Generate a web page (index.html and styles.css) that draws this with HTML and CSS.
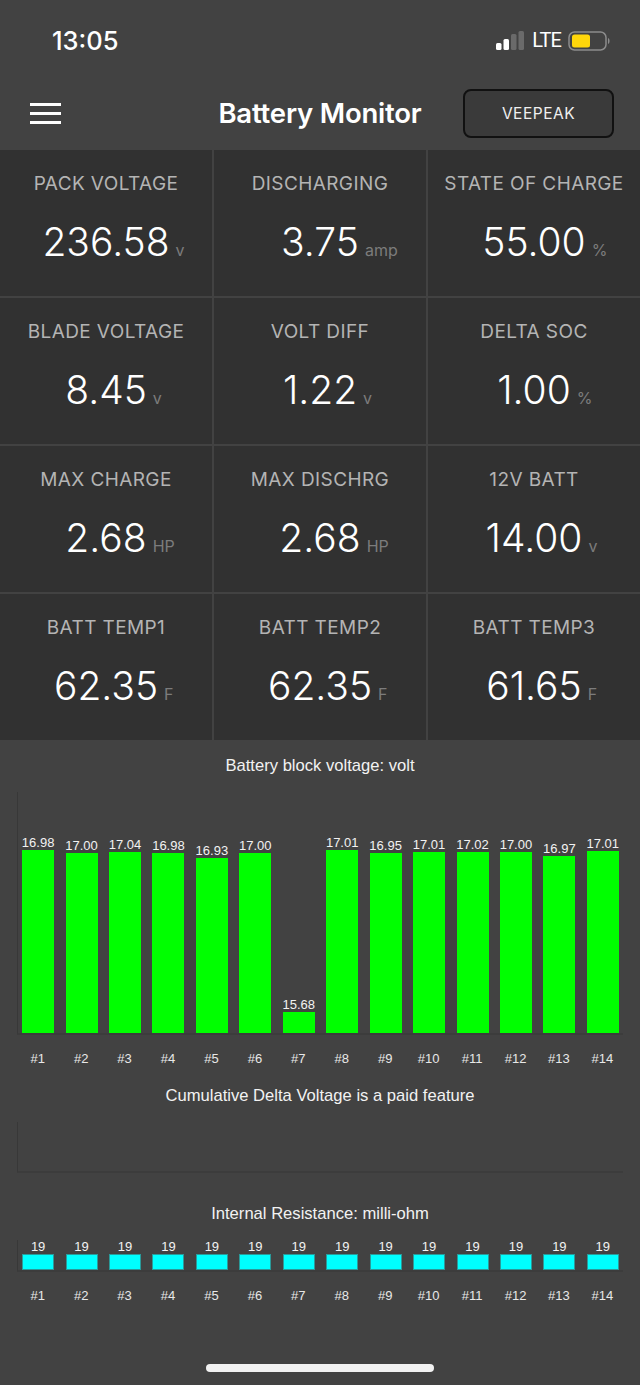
FILE: index.html
```html
<!DOCTYPE html>
<html>
  <head>
    <meta charset="utf-8">
    <title>Battery Monitor</title>
    <link rel="stylesheet" href="styles.css">
  </head>
  <body>
    <div id="bm-main">
      <div class="status-bar">
        <span class="status-time">13:05</span>
        <div class="status-icons">
          <svg class="signal" width="28" height="19" viewBox="0 0 28 19">
            <rect x="0" y="12" width="5.5" height="7" rx="1.5" fill="#fff"/>
            <rect x="7.5" y="8" width="5.5" height="11" rx="1.5" fill="#fff"/>
            <rect x="15" y="3" width="5.5" height="16" rx="1.5" fill="#6a6a6a"/>
            <rect x="22.5" y="0" width="5.5" height="19" rx="1.5" fill="#6a6a6a"/>
          </svg>
          <span class="status-lte">LTE</span>
          <svg class="battery" width="43" height="20" viewBox="0 0 43 20">
            <rect x="1" y="1" width="37" height="18" rx="5.5" fill="none" stroke="#8c8c8c" stroke-width="1.5"/>
            <rect x="4" y="3.5" width="18" height="13" rx="2.5" fill="#ffd60a"/>
            <path d="M40 7 C42 7.5 42 12.5 40 13 Z" fill="#8c8c8c"/>
          </svg>
        </div>
      </div>

      <div class="nav-bar">
        <div class="menu-btn"><span></span><span></span><span></span></div>
        <h1 class="nav-title">Battery Monitor</h1>
        <button class="device-btn">VEEPEAK</button>
      </div>

      <div class="stat-grid">
        <div class="stat"><div class="stat-label">PACK VOLTAGE</div><div class="stat-value"><span class="num">236.58</span><small>v</small></div></div>
        <div class="stat"><div class="stat-label">DISCHARGING</div><div class="stat-value"><span class="num">3.75</span><small>amp</small></div></div>
        <div class="stat"><div class="stat-label">STATE OF CHARGE</div><div class="stat-value"><span class="num">55.00</span><small>%</small></div></div>
        <div class="stat"><div class="stat-label">BLADE VOLTAGE</div><div class="stat-value"><span class="num">8.45</span><small>v</small></div></div>
        <div class="stat"><div class="stat-label">VOLT DIFF</div><div class="stat-value"><span class="num">1.22</span><small>v</small></div></div>
        <div class="stat"><div class="stat-label">DELTA SOC</div><div class="stat-value"><span class="num">1.00</span><small>%</small></div></div>
        <div class="stat"><div class="stat-label">MAX CHARGE</div><div class="stat-value"><span class="num">2.68</span><small>HP</small></div></div>
        <div class="stat"><div class="stat-label">MAX DISCHRG</div><div class="stat-value"><span class="num">2.68</span><small>HP</small></div></div>
        <div class="stat"><div class="stat-label">12V BATT</div><div class="stat-value"><span class="num">14.00</span><small>v</small></div></div>
        <div class="stat"><div class="stat-label">BATT TEMP1</div><div class="stat-value"><span class="num">62.35</span><small>F</small></div></div>
        <div class="stat"><div class="stat-label">BATT TEMP2</div><div class="stat-value"><span class="num">62.35</span><small>F</small></div></div>
        <div class="stat"><div class="stat-label">BATT TEMP3</div><div class="stat-value"><span class="num">61.65</span><small>F</small></div></div>
      </div>

      <div class="chart-title title-volt">Battery block voltage: volt</div>
      <div class="plot plot-volt" id="volt-plot"></div>
      <div class="ticks" id="volt-ticks"></div>

      <div class="chart-title title-delta">Cumulative Delta Voltage is a paid feature</div>
      <div class="plot plot-delta"></div>

      <div class="chart-title title-res">Internal Resistance: milli-ohm</div>
      <div class="plot plot-res" id="res-plot"></div>
      <div class="ticks" id="res-ticks"></div>

      <div class="home-bar"></div>
    </div>
    <script type="text/javascript">
      var volts = [
        ['16.98', 183], ['17.00', 180], ['17.04', 181], ['16.98', 180], ['16.93', 175], ['17.00', 180], ['15.68', 21],
        ['17.01', 183], ['16.95', 180], ['17.01', 181], ['17.02', 181], ['17.00', 181], ['16.97', 177], ['17.01', 182]
      ];
      function addBar(plot, label, height, cls) {
        var col = document.createElement('div');
        col.className = 'col';
        var val = document.createElement('span');
        val.className = 'bar-value';
        val.textContent = label;
        var bar = document.createElement('div');
        bar.className = 'bar ' + cls;
        bar.style.height = height + 'px';
        col.appendChild(val);
        col.appendChild(bar);
        plot.appendChild(col);
      }
      function addTicks(row) {
        for (var i = 1; i <= 14; i++) {
          var t = document.createElement('span');
          t.textContent = '#' + i;
          row.appendChild(t);
        }
      }
      var vp = document.getElementById('volt-plot');
      var rp = document.getElementById('res-plot');
      volts.forEach(function(v) { addBar(vp, v[0], v[1], 'bar-green'); });
      for (var i = 0; i < 14; i++) { addBar(rp, '19', 16, 'bar-cyan'); }
      addTicks(document.getElementById('volt-ticks'));
      addTicks(document.getElementById('res-ticks'));
    </script>
  </body>
</html>
```

FILE: styles.css
```css
* {
  box-sizing: border-box;
}
html, body {
  margin: 0;
  padding: 0;
  background-color: #424242;
}
#bm-main {
  width: 640px;
  height: 1385px;
  overflow: hidden;
  background-color: #424242;
  color: #fff;
  font-family: Inter, "Liberation Sans", sans-serif;
}
.status-bar {
  height: 80px;
  display: flex;
  justify-content: space-between;
  align-items: flex-start;
  padding: 26px 29px 0 52px;
}
.status-time {
  font-size: 25.5px;
  line-height: 30px;
  font-weight: 500;
}
.status-icons {
  display: flex;
  align-items: center;
  gap: 7px;
  height: 29px;
}
.status-lte {
  font-family: Roboto, sans-serif;
  font-size: 20px;
  font-weight: 400;
  line-height: 29px;
  letter-spacing: -0.9px;
  margin-left: 1px;
}
.nav-bar {
  height: 70px;
  display: grid;
  grid-template-columns: 1fr auto 1fr;
  align-items: center;
  padding: 0 26px 4px 30px;
}
.menu-btn {
  width: 31px;
  display: flex;
  flex-direction: column;
  gap: 6px;
}
.menu-btn span {
  display: block;
  height: 3px;
  background-color: #fff;
}
.nav-title {
  margin: 0;
  font-size: 27.5px;
  font-weight: 600;
  line-height: 34px;
  letter-spacing: -0.2px;
  transform: translateX(-2px);
}
.device-btn {
  justify-self: end;
  width: 151px;
  height: 49px;
  background-color: #3a3a3a;
  border: 2px solid #111;
  border-radius: 8px;
  color: #f0f0f0;
  font-family: Inter, "Liberation Sans", sans-serif;
  font-size: 15.5px;
  letter-spacing: 0.5px;
}
.stat-grid {
  display: grid;
  grid-template-columns: 212px 212px 212px;
  grid-auto-rows: 146px;
  column-gap: 2px;
  row-gap: 2px;
  height: 590px;
}
.stat {
  background-color: #313131;
  text-align: center;
  padding-top: 22px;
}
.stat-label {
  color: #b4b4b4;
  font-size: 19px;
  line-height: 24px;
  letter-spacing: 0.4px;
}
.stat-value {
  display: grid;
  grid-template-columns: 1fr auto 1fr;
  align-items: baseline;
  margin-top: 20px;
  font-size: 39px;
  line-height: 52px;
  font-weight: 300;
}
.num {
  grid-column: 2;
}
.stat-value small {
  grid-column: 3;
  justify-self: start;
  margin-left: 6px;
  font-size: 16px;
  font-weight: 400;
  color: #7c7c7c;
}
.chart-title {
  font-family: "Liberation Sans", sans-serif;
  font-size: 16.6px;
  line-height: 22px;
  text-align: center;
  color: #f2f2f2;
}
.title-volt {
  margin-top: 15px;
}
.title-delta {
  margin-top: 18px;
}
.title-res {
  margin-top: 30px;
}
.plot {
  width: 606px;
  margin-left: 17px;
  border-left: 1px solid #383838;
  border-bottom: 2px solid #3c3c3c;
  display: flex;
  align-items: flex-end;
}
.plot-volt {
  height: 243px;
  margin-top: 15px;
}
.plot-delta {
  height: 51px;
  margin-top: 15px;
}
.plot-res {
  height: 32px;
  margin-top: 15px;
}
.col {
  flex: 0 0 43.45px;
  display: flex;
  flex-direction: column;
  align-items: center;
}
.col:first-child {
  margin-left: -1.6px;
}
.bar-value {
  font-family: "Liberation Sans", sans-serif;
  font-size: 13px;
  line-height: 14px;
  color: #f2f2f2;
}
.bar {
  width: 32px;
}
.bar-green {
  background-color: #00ff00;
}
.bar-cyan {
  background-color: #00ffff;
  border: 1px solid #2a9a9a;
}
.ticks {
  display: flex;
  margin-left: 16px;
  margin-top: 16px;
  font-family: "Liberation Sans", sans-serif;
  font-size: 13px;
  line-height: 16px;
  color: #e8e8e8;
}
.ticks span {
  flex: 0 0 43.45px;
  text-align: center;
}
.home-bar {
  margin: 60px 0 0 206px;
  width: 228px;
  height: 8px;
  border-radius: 4px;
  background-color: #f2f2f2;
}
```
